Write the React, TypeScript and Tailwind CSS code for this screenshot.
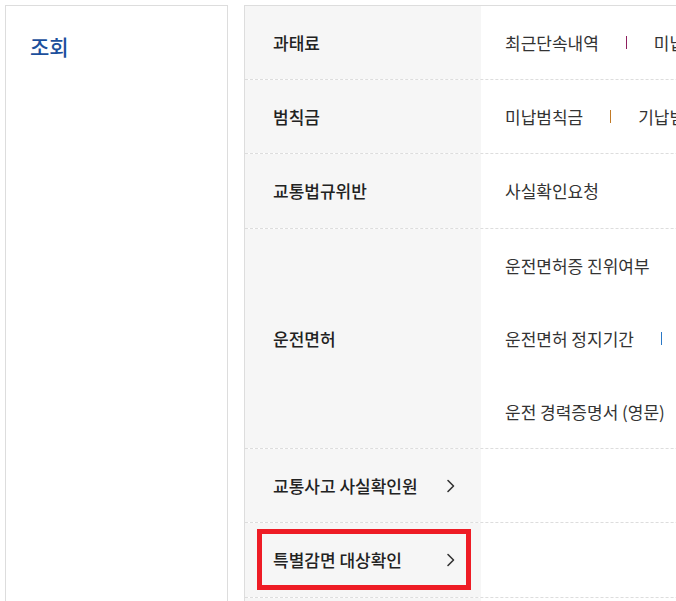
import React from "react";

const font = { fontFamily: '"Noto Sans CJK KR", "Noto Sans", sans-serif' };

function Sep({ color }: { color: string }) {
  return <span className={`inline-block w-px h-[13px] mx-[27px] ${color}`} />;
}

function Chevron() {
  return (
    <svg width="10" height="14" viewBox="0 0 10 14" fill="none" className="shrink-0">
      <path d="M2 1.5 L7.5 7 L2 12.5" stroke="#333" strokeWidth="1.6" strokeLinecap="round" strokeLinejoin="round" />
    </svg>
  );
}

export default function App() {
  return (
    <div
      className="w-[676px] h-[601px] overflow-hidden bg-white flex gap-4 pl-[5px] pt-[5px] text-[17px]"
      style={font}
    >
      {/* Left box */}
      <div className="w-[223px] h-[640px] shrink-0 border border-[#dddddd] pl-[24px] pt-[26px]">
        <h2 className="text-[21px] leading-[28px] font-medium text-[#1c4f9c]">조회</h2>
      </div>

      {/* Right panel */}
      <div className="w-[700px] shrink-0 border-l border-t border-[#dddddd] text-[#333]">
        {/* 과태료 */}
        <div className="flex h-[74px] border-b border-dashed border-[#dddddd]">
          <div className="w-[236px] shrink-0 bg-[#f6f6f6] pl-[28px] flex items-center font-medium text-[#222]">과태료</div>
          <div className="flex items-center pl-[24px] whitespace-nowrap">
            <span>최근단속내역</span>
            <Sep color="bg-[#8e1f5e]" />
            <span>미납과태료</span>
          </div>
        </div>

        {/* 범칙금 */}
        <div className="flex h-[74px] border-b border-dashed border-[#dddddd]">
          <div className="w-[236px] shrink-0 bg-[#f6f6f6] pl-[28px] flex items-center font-medium text-[#222]">범칙금</div>
          <div className="flex items-center pl-[24px] whitespace-nowrap">
            <span>미납범칙금</span>
            <Sep color="bg-[#c27a26]" />
            <span>기납범칙금</span>
          </div>
        </div>

        {/* 교통법규위반 */}
        <div className="flex h-[75px] border-b border-dashed border-[#dddddd]">
          <div className="w-[236px] shrink-0 bg-[#f6f6f6] pl-[28px] flex items-center font-medium text-[#222]">교통법규위반</div>
          <div className="flex items-center pl-[24px] whitespace-nowrap">사실확인요청</div>
        </div>

        {/* 운전면허 */}
        <div className="flex h-[220px] border-b border-dashed border-[#dddddd]">
          <div className="w-[236px] shrink-0 bg-[#f6f6f6] pl-[28px] flex items-center font-medium text-[#222]">운전면허</div>
          <div className="flex flex-col pl-[24px] whitespace-nowrap">
            <div className="h-[73px] flex items-center">운전면허증 진위여부</div>
            <div className="h-[73px] flex items-center">
              <span>운전면허 정지기간</span>
              <Sep color="bg-[#2a78c6]" />
              <span>운전면허 벌점</span>
            </div>
            <div className="h-[73px] flex items-center">운전 경력증명서 (영문)</div>
          </div>
        </div>

        {/* 교통사고 사실확인원 */}
        <div className="flex h-[74px] border-b border-dashed border-[#dddddd]">
          <div className="w-[236px] shrink-0 bg-[#f6f6f6] pl-[28px] pr-[25px] flex items-center justify-between font-medium text-[#222]">
            <span>교통사고 사실확인원</span>
            <Chevron />
          </div>
          <div className="flex-1" />
        </div>

        {/* 특별감면 대상확인 */}
        <div className="flex h-[75px] border-b border-dashed border-[#dddddd]">
          <div className="relative w-[236px] shrink-0 bg-[#f6f6f6] pl-[28px] pr-[25px] flex items-center justify-between font-medium text-[#222]">
            <span>특별감면 대상확인</span>
            <Chevron />
            <div className="absolute left-[12px] right-[10px] top-[6px] bottom-[7px] border-[5px] border-[#ee1c25] pointer-events-none" />
          </div>
          <div className="flex-1" />
        </div>

        <div className="flex h-[40px]">
          <div className="w-[236px] shrink-0 bg-[#f6f6f6]" />
        </div>
      </div>
    </div>
  );
}
